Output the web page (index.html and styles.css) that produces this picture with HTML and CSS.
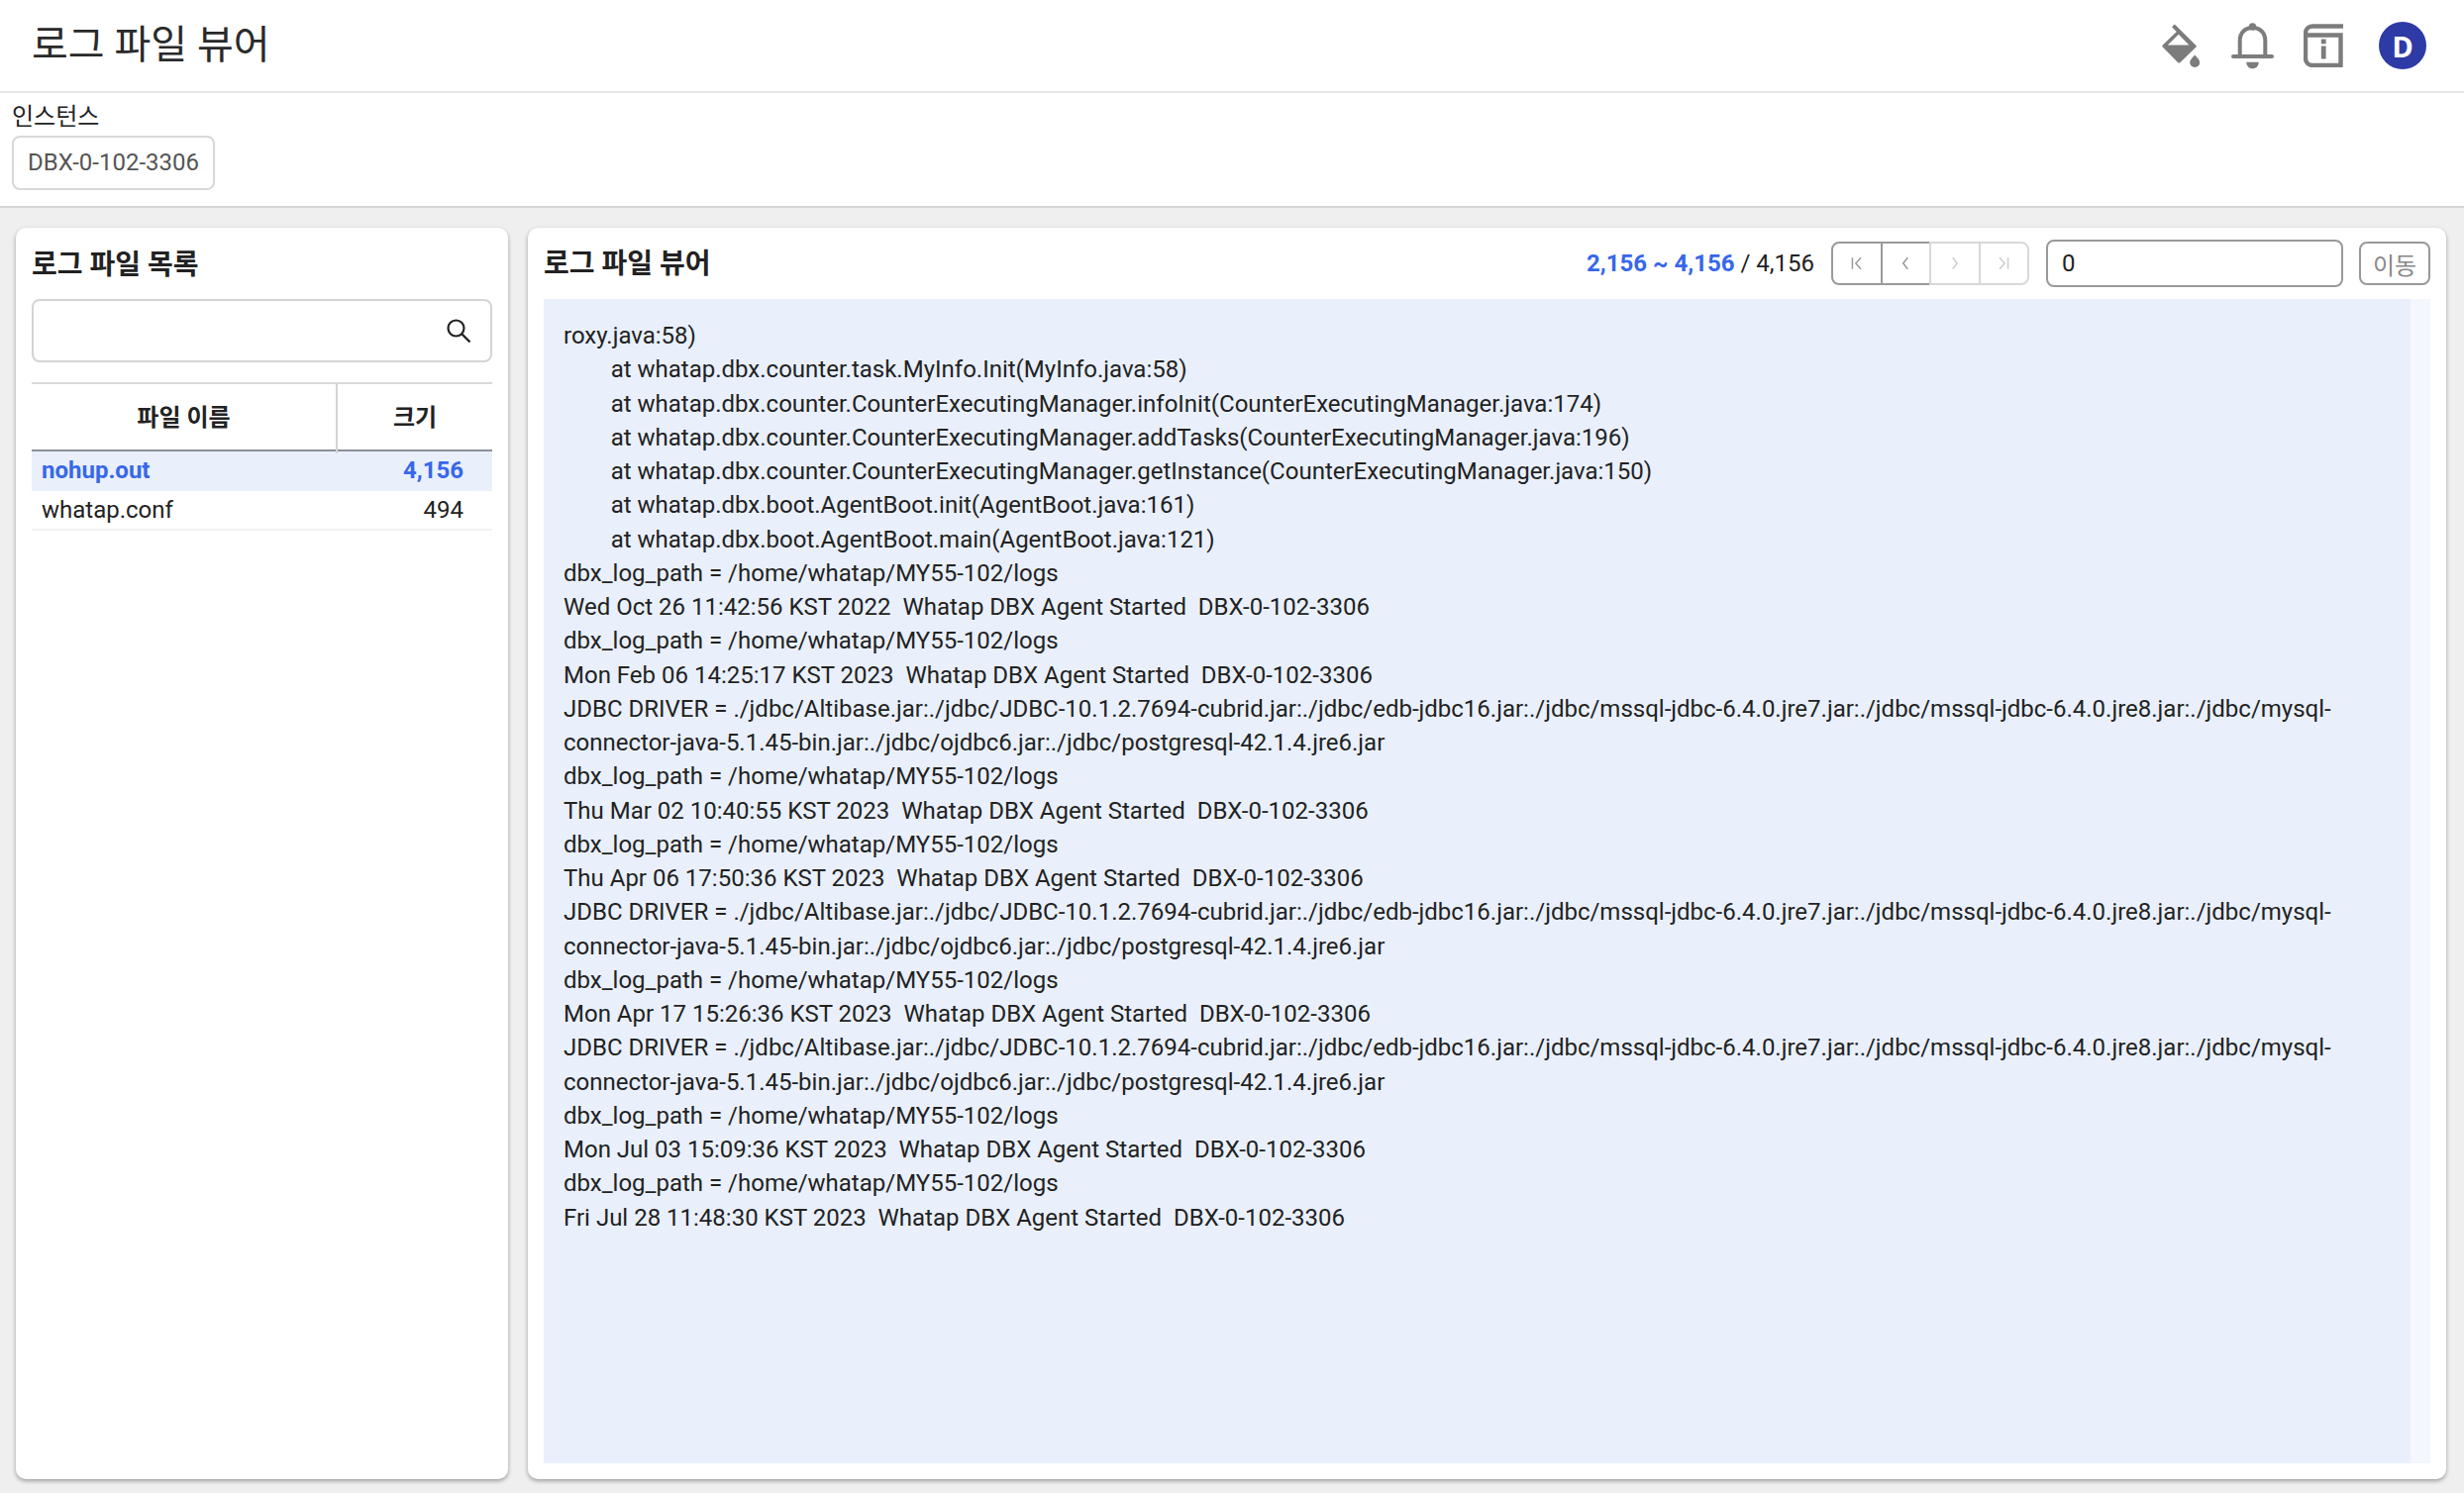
FILE: index.html
```html
<!DOCTYPE html>
<html lang="ko">
<head>
<meta charset="utf-8">
<title>로그 파일 뷰어</title>
<link rel="stylesheet" href="styles.css">
</head>
<body>
<header class="topbar">
  <h1 class="page-title">로그 파일 뷰어</h1>
  <div class="top-icons">
    <svg class="ico-paint" viewBox="0 0 38 44"><path d="M10 3.200 L12.800 .4 L34.500 22 Q35.200 22.800 34.500 23.500 L18.500 39 Q17.300 40 16 39 L.7 23.500 Q0 22.500 .7 21.500 L14.800 8 Z M16.800 10.800 L5.800 21.500 H27.400 Z" fill="#7c7c7c" fill-rule="evenodd"/><path d="M33.200 31.500 Q28.200 36.500 28.200 39 a5 5 0 0 0 10 0 Q38.200 36.500 33.200 31.500Z" fill="#7c7c7c"/></svg>
    <svg class="ico-bell" viewBox="0 0 43 48"><circle cx="21.500" cy="5" r="3.800" fill="#7c7c7c"/><path d="M8.700 35 V19 C8.700 11 14 6 21.500 6 C29 6 34.300 11 34.300 19 V35" fill="none" stroke="#7c7c7c" stroke-width="4"/><path d="M2 35 H41" stroke="#7c7c7c" stroke-width="4" stroke-linecap="round"/><path d="M15.300 40.700 H27.700 C27.700 44.500 25 47.300 21.500 47.300 C18 47.300 15.300 44.500 15.300 40.700Z" fill="#7c7c7c"/></svg>
    <svg class="ico-book" viewBox="0 0 40 44"><path d="M40 2.500 H9 C5 2.500 2 5.500 2 9.500 V35 C2 39 5 42 9 42 H37.500 V11.500 H3" fill="none" stroke="#7c7c7c" stroke-width="4.400"/><rect x="17.800" y="15.500" width="4.800" height="4.800" fill="#7c7c7c"/><rect x="17.800" y="22.500" width="4.800" height="13" fill="#7c7c7c"/></svg>
    <div class="avatar">D</div>
  </div>
</header>

<section class="filter-bar">
  <label class="filter-label">인스턴스</label>
  <div class="chip">DBX-0-102-3306</div>
</section>

<main class="content">
  <aside class="card side">
    <h2 class="card-title">로그 파일 목록</h2>
    <div class="search">
      <svg class="ico-search" viewBox="0 0 26 26"><circle cx="10.500" cy="10.500" r="8" fill="none" stroke="#222" stroke-width="2.200"/><path d="M16.500 16.500 L24.500 24.500" stroke="#222" stroke-width="2.400"/></svg>
    </div>
    <div class="table">
      <div class="thead">
        <div class="th th-name">파일 이름</div>
        <div class="th th-size">크기</div>
      </div>
      <div class="tr active"><span class="td-name">nohup.out</span><span class="td-size">4,156</span></div>
      <div class="tr"><span class="td-name">whatap.conf</span><span class="td-size">494</span></div>
    </div>
  </aside>

  <section class="card viewer">
    <div class="viewer-head">
      <h2 class="card-title">로그 파일 뷰어</h2>
      <div class="viewer-tools">
        <div class="range"><b>2,156 ~ 4,156</b> / 4,156</div>
        <div class="pager">
          <button class="pg on"><svg viewBox="0 0 14 14"><path d="M3 2v10M10.500 2 6 7l4.500 5" /></svg></button>
          <button class="pg on"><svg viewBox="0 0 14 14"><path d="M9 2 5 7l4 5" /></svg></button>
          <button class="pg off"><svg viewBox="0 0 14 14"><path d="M5 2l4 5-4 5" /></svg></button>
          <button class="pg off"><svg viewBox="0 0 14 14"><path d="M11 2v10M3.500 2 8 7l-4.500 5" /></svg></button>
        </div>
        <div class="goto">0</div>
        <button class="go">이동</button>
      </div>
    </div>
    <div class="log-wrap">
      <pre class="log">roxy.java:58)
	at whatap.dbx.counter.task.MyInfo.Init(MyInfo.java:58)
	at whatap.dbx.counter.CounterExecutingManager.infoInit(CounterExecutingManager.java:174)
	at whatap.dbx.counter.CounterExecutingManager.addTasks(CounterExecutingManager.java:196)
	at whatap.dbx.counter.CounterExecutingManager.getInstance(CounterExecutingManager.java:150)
	at whatap.dbx.boot.AgentBoot.init(AgentBoot.java:161)
	at whatap.dbx.boot.AgentBoot.main(AgentBoot.java:121)
dbx_log_path = /home/whatap/MY55-102/logs
Wed Oct 26 11:42:56 KST 2022  Whatap DBX Agent Started  DBX-0-102-3306
dbx_log_path = /home/whatap/MY55-102/logs
Mon Feb 06 14:25:17 KST 2023  Whatap DBX Agent Started  DBX-0-102-3306
JDBC DRIVER = ./jdbc/Altibase.jar:./jdbc/JDBC-10.1.2.7694-cubrid.jar:./jdbc/edb-jdbc16.jar:./jdbc/mssql-jdbc-6.4.0.jre7.jar:./jdbc/mssql-jdbc-6.4.0.jre8.jar:./jdbc/mysql-connector-java-5.1.45-bin.jar:./jdbc/ojdbc6.jar:./jdbc/postgresql-42.1.4.jre6.jar
dbx_log_path = /home/whatap/MY55-102/logs
Thu Mar 02 10:40:55 KST 2023  Whatap DBX Agent Started  DBX-0-102-3306
dbx_log_path = /home/whatap/MY55-102/logs
Thu Apr 06 17:50:36 KST 2023  Whatap DBX Agent Started  DBX-0-102-3306
JDBC DRIVER = ./jdbc/Altibase.jar:./jdbc/JDBC-10.1.2.7694-cubrid.jar:./jdbc/edb-jdbc16.jar:./jdbc/mssql-jdbc-6.4.0.jre7.jar:./jdbc/mssql-jdbc-6.4.0.jre8.jar:./jdbc/mysql-connector-java-5.1.45-bin.jar:./jdbc/ojdbc6.jar:./jdbc/postgresql-42.1.4.jre6.jar
dbx_log_path = /home/whatap/MY55-102/logs
Mon Apr 17 15:26:36 KST 2023  Whatap DBX Agent Started  DBX-0-102-3306
JDBC DRIVER = ./jdbc/Altibase.jar:./jdbc/JDBC-10.1.2.7694-cubrid.jar:./jdbc/edb-jdbc16.jar:./jdbc/mssql-jdbc-6.4.0.jre7.jar:./jdbc/mssql-jdbc-6.4.0.jre8.jar:./jdbc/mysql-connector-java-5.1.45-bin.jar:./jdbc/ojdbc6.jar:./jdbc/postgresql-42.1.4.jre6.jar
dbx_log_path = /home/whatap/MY55-102/logs
Mon Jul 03 15:09:36 KST 2023  Whatap DBX Agent Started  DBX-0-102-3306
dbx_log_path = /home/whatap/MY55-102/logs
Fri Jul 28 11:48:30 KST 2023  Whatap DBX Agent Started  DBX-0-102-3306</pre>
      <div class="track"></div>
    </div>
  </section>
</main>
</body>
</html>
```
FILE: styles.css
```css
* { box-sizing: border-box; }
html, body { margin: 0; height: 100%; }
body {
  width: 2488px; height: 1508px; overflow: hidden;
  background: #efefef; color: #222;
  font-family: Roboto, "Noto Sans CJK KR", sans-serif;
  display: flex; flex-direction: column;
}
.topbar {
  height: 94px; flex: none; background: #fff; border-bottom: 2px solid #e6e6e6;
  display: flex; align-items: center; justify-content: space-between;
  padding: 0 38px 0 32px;
}
.page-title { margin: 0 0 8px; font-size: 40px; font-weight: 400; color: #2a2a2a; }
.top-icons { display: flex; align-items: center; }
.ico-paint { width: 38px; height: 44px; margin-right: 32px; }
.ico-bell { width: 43px; height: 48px; margin-right: 30px; }
.ico-book { width: 40px; height: 44px; margin-right: 36px; }
.avatar {
  width: 48px; height: 48px; border-radius: 50%; background: #2e3aa6; color: #fff;
  font-size: 29px; font-weight: 700; display: flex; align-items: center; justify-content: center;
  font-family: "Noto Sans", sans-serif;
}
.filter-bar {
  height: 116px; flex: none; background: #fff; border-bottom: 2px solid #d4d4d4;
  padding: 9px 12px 0 12px; display: flex; flex-direction: column; align-items: flex-start;
}
.filter-label { font-size: 24px; line-height: 30px; color: #222; }
.chip {
  margin-top: 4px; width: 205px; height: 55px; border: 2px solid #d8d8d8; border-radius: 8px;
  padding-bottom: 2px;
  font-size: 24px; color: #555; display: flex; align-items: center; justify-content: center;
}
.content {
  flex: 1; display: flex; gap: 20px; padding: 20px 18px 14px 16px; min-height: 0;
}
.card {
  background: #fff; border-radius: 10px; box-shadow: 0 2px 4px rgba(0,0,0,.35);
  padding: 18px 16px 16px; display: flex; flex-direction: column;
}
.side { width: 497px; flex: none; }
.viewer { flex: 1; min-width: 0; }
.card-title { margin: 0; padding-top: 2px; font-size: 28px; font-weight: 700; line-height: 36px; color: #222; }
.search {
  margin-top: 16px; height: 64px; border: 2px solid #d4d4d4; border-radius: 8px;
  display: flex; align-items: center; justify-content: flex-end; padding-right: 19px;
}
.ico-search { width: 26px; height: 26px; }
.table { margin-top: 20px; }
.thead {
  display: flex; height: 70px; border-top: 2px solid #d8d8d8; border-bottom: 2px solid #8a8f9a;
}
.th { font-size: 24px; font-weight: 700; display: flex; align-items: center; justify-content: center; padding-bottom: 3px; }
.th-name { width: 309px; border-right: 2px solid #d4d4d4; margin-bottom: -4px; padding-bottom: 7px; position: relative; }
.th-size { flex: 1; }
.tr {
  display: flex; justify-content: space-between; align-items: center;
  height: 40px; font-size: 24px; padding: 0 29px 0 10px; border-bottom: 2px solid #f2f2f2;
}
.tr.active { background: #e9f0fc; color: #3767ea; font-weight: 700; border-bottom: 0; padding-bottom: 2px; }
.viewer-head { display: flex; align-items: center; justify-content: space-between; height: 36px; }
.viewer-tools { display: flex; align-items: center; }
.range { font-size: 24px; color: #222; margin-right: 17px; }
.range b { color: #3767ea; font-weight: 700; }
.pager { display: flex; width: 200px; height: 44px; margin-right: 17px; }
.pg {
  flex: 1 1 0; min-width: 0; padding: 0; background: #fff; margin-left: -2px;
  display: flex; align-items: center; justify-content: center;
  border: 2px solid #9a9a9a;
}
.pg svg { width: 16px; height: 16px; fill: none; stroke-width: 1.300; }
.pg.on svg { stroke: #999; }
.pg.off { border-color: #d8d8d8; }
.pg.off svg { stroke: #ccc; }
.pg:first-child { border-radius: 8px 0 0 8px; margin-left: 0; }
.pg:last-child { border-radius: 0 8px 8px 0; }
.goto {
  width: 300px; height: 48px; border: 2px solid #999; border-radius: 8px;
  font-size: 24px; padding-left: 14px; display: flex; align-items: center; color: #222;
}
.go {
  margin-left: 16px; width: 72px; height: 44px; background: #fff; border: 2px solid #999; border-radius: 8px;
  font: 24px Roboto, "Noto Sans CJK KR", sans-serif; color: #888; padding: 0;
  display: flex; align-items: center; justify-content: center;
}
.log-wrap {
  margin-top: 18px; flex: 1; min-height: 0; display: flex; background: #e9f0fc;
}
.log {
  flex: 1; min-width: 0; margin: 0; padding: 20px; font: 24px/34.250px Roboto, "Noto Sans CJK KR", sans-serif;
  color: #222; white-space: pre-wrap; overflow: hidden;
}
.track { width: 20px; flex: none; background: #f4f7fe; }
```
